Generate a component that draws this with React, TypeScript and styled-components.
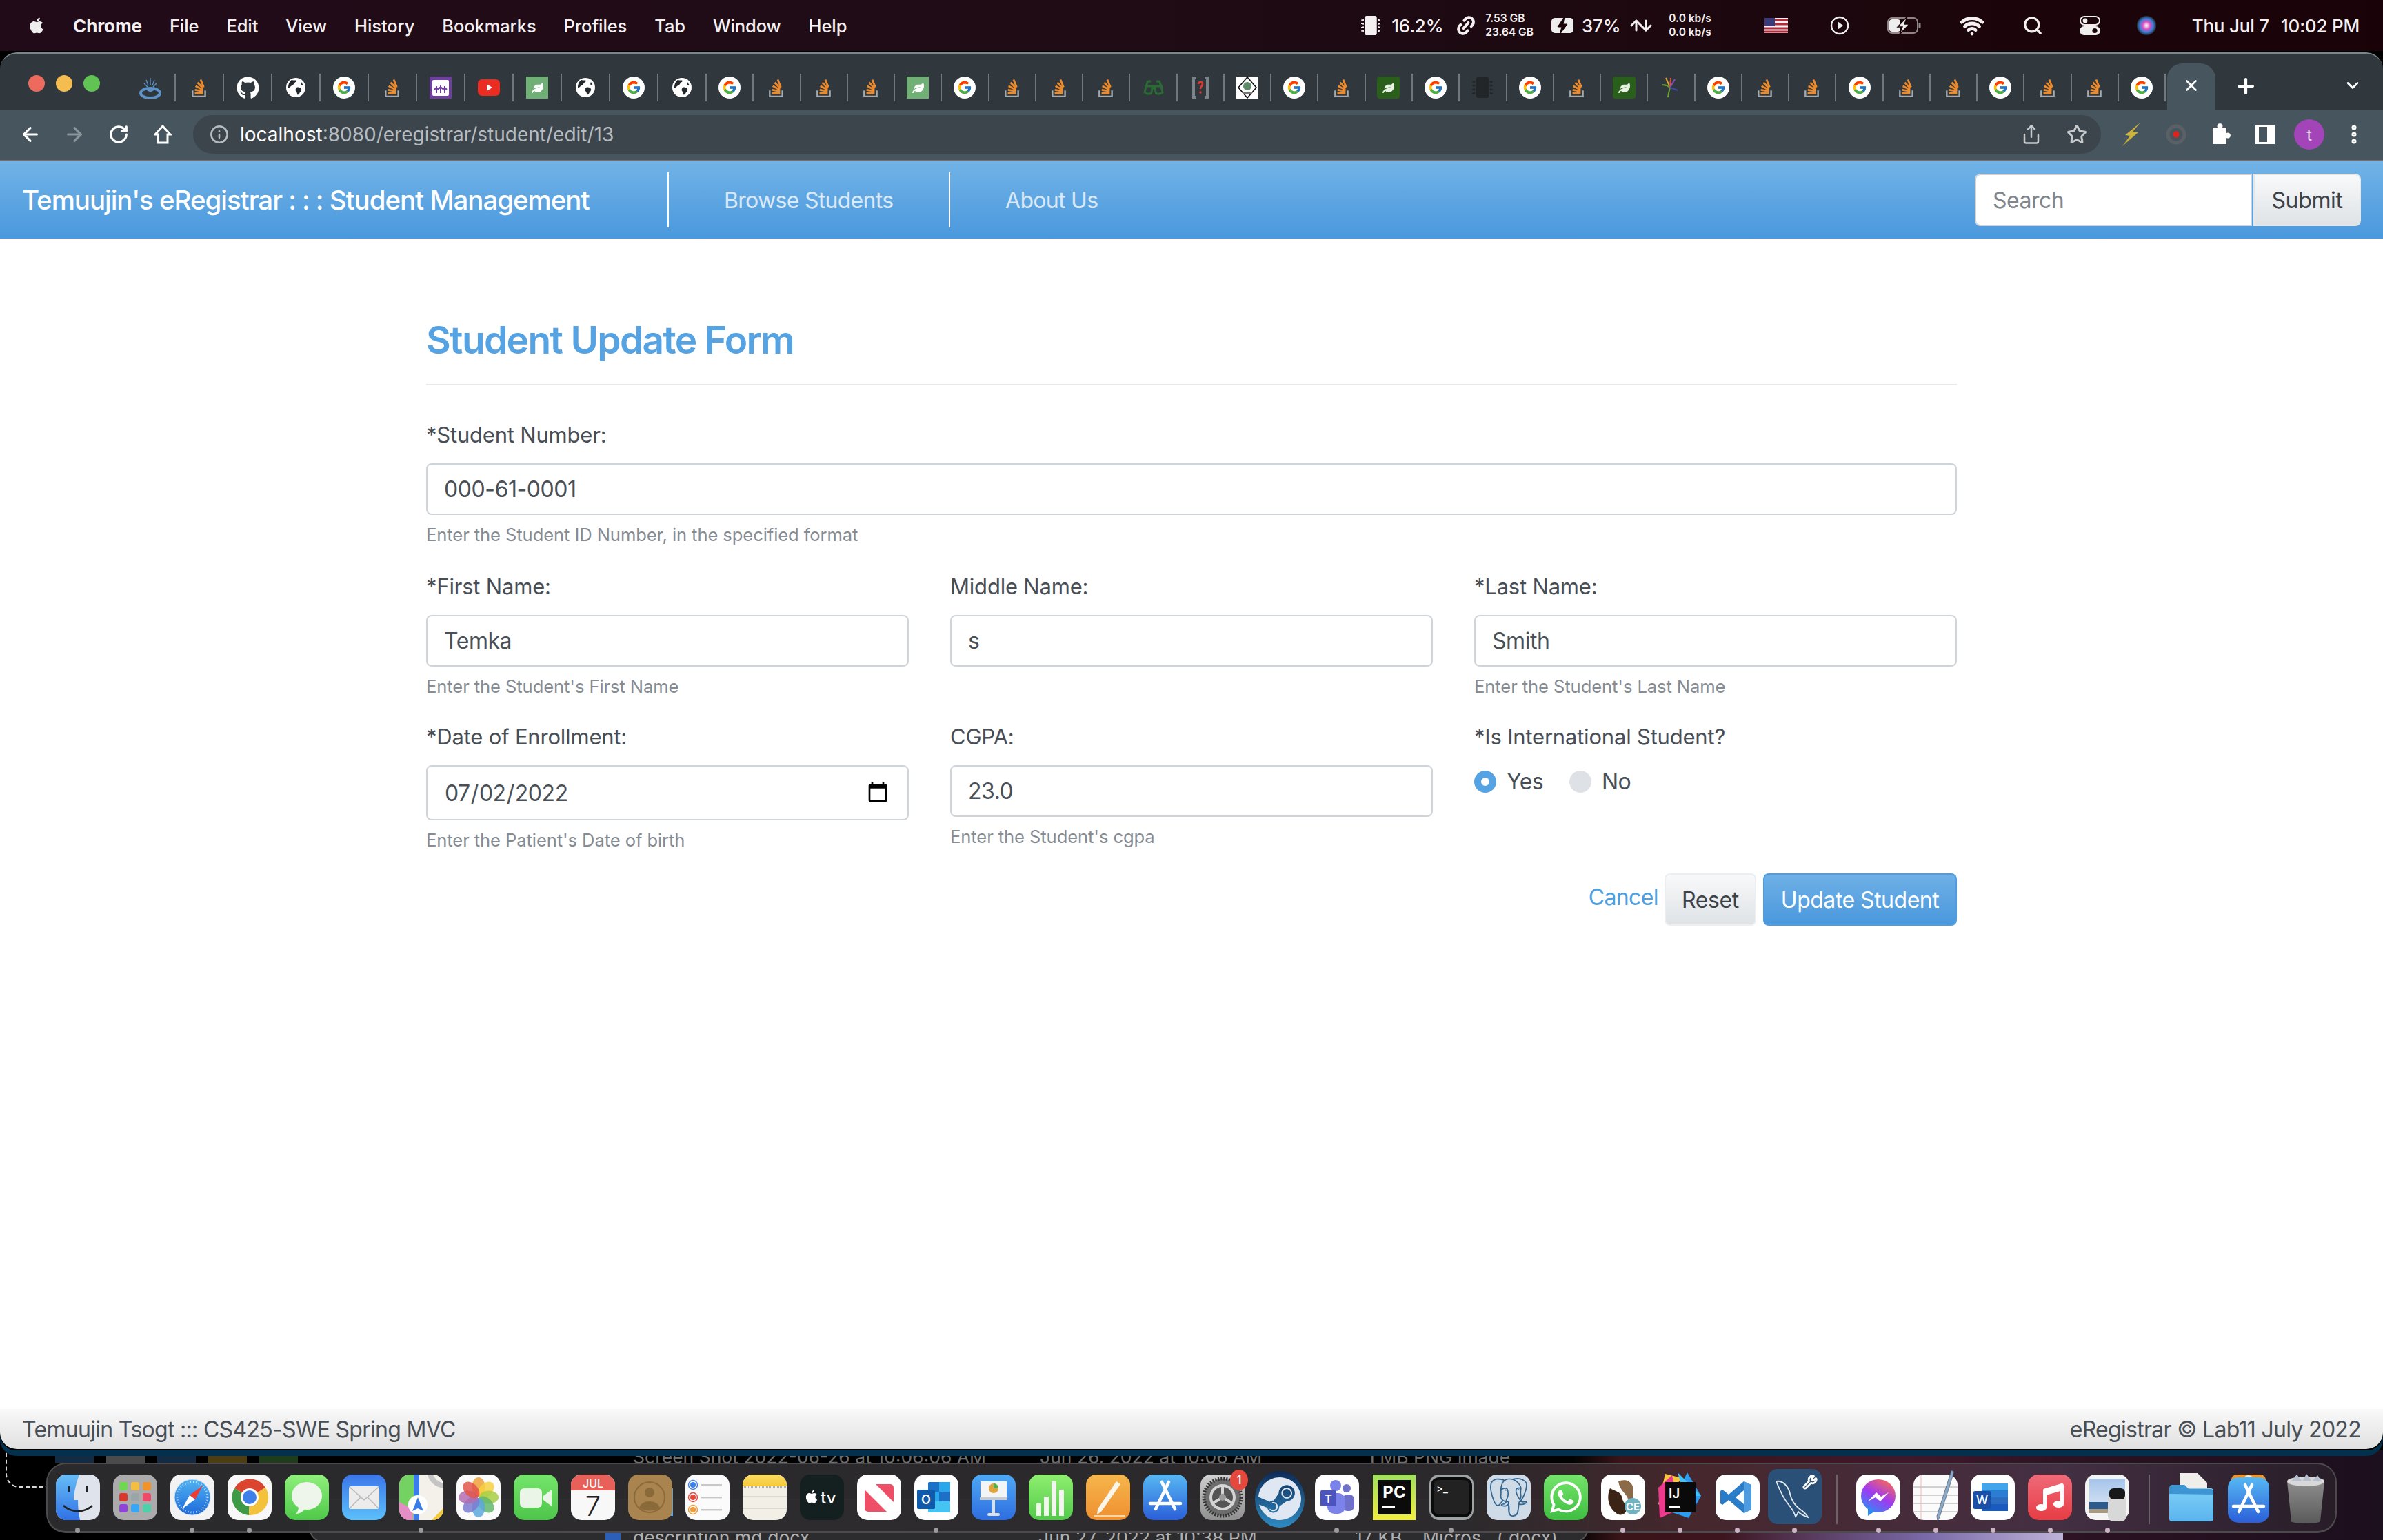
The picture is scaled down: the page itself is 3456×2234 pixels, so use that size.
import React from "react";
import styled, { createGlobalStyle } from "styled-components";
import { FaApple, FaGithub, FaLeaf, FaSteam, FaWhatsapp, FaMusic, FaMicrochip } from "react-icons/fa";
import { FcGoogle } from "react-icons/fc";
import { SiPostgresql } from "react-icons/si";
import { Search, Wifi, Share, Star, Info, EllipsisVertical, ArrowLeft, ArrowRight, RotateCw, X, Plus, ChevronDown, Wrench, Link2, ArrowUp, ArrowDown } from "lucide-react";

const FONT = `Inter, "Liberation Sans", sans-serif`;

const Global = createGlobalStyle`
  html, body { margin: 0; padding: 0; background: #000; }
  body { font-family: ${FONT}; }
  * { box-sizing: border-box; }
`;

const Screen = styled.div`
  width: 3456px; height: 2234px; display: flex; flex-direction: column; overflow: hidden; background: #000;
`;

/* ---------- macOS menu bar ---------- */
const MenuBar = styled.header`
  height: 74px; margin-bottom: 2px; flex: none; display: flex; align-items: center; padding: 0 34px 0 40px;
  background: linear-gradient(90deg, #220b19 0%, #1f0c15 45%, #1a0308 100%);
  color: #f4f0f2; font-size: 26px;
`;
const MenuItems = styled.nav`display: flex; align-items: center; gap: 40px;`;
const MenuItem = styled.span<{ $bold?: boolean }>`
  font-weight: ${p => (p.$bold ? 700 : 500)}; white-space: nowrap; letter-spacing: -0.1px;
  font-size: ${p => (p.$bold ? 26 : 25.5)}px;
`;
const Tray = styled.div`margin-left: auto; display: flex; align-items: center;`;
const TrayItem = styled.div<{ $gap: number }>`
  margin-left: ${p => p.$gap}px; display: flex; align-items: center; justify-content: center; white-space: nowrap;
  font-weight: 500; letter-spacing: -0.2px; font-size: 26px;
`;
const TrayStack = styled(TrayItem)`
  flex-direction: column; font-size: 15.5px; line-height: 20px; align-items: flex-start; letter-spacing: 0; font-weight: 600;
`;
const TrayArrows = styled(TrayItem)`width: 28px;`;

/* ---------- browser window ---------- */
const Window = styled.div`
  height: 2028px; flex: none; display: flex; flex-direction: column; overflow: hidden;
  border-radius: 24px; position: relative; z-index: 2;
  border-bottom: 2px solid #000;
`;
const WindowShadow = styled.div`
  border-radius: 24px; box-shadow: 0 8px 0 #03304c; position: relative; z-index: 2; flex: none;
`;
const TabStrip = styled.div`
  height: 84px; flex: none; display: flex; align-items: flex-start; background: #30383e;
  border-top: 2px solid #7d878b; position: relative; padding-left: 41px; border-radius: 24px 24px 0 0;
`;
const Lights = styled.div`display: flex; gap: 16px; padding-top: 31px; width: 142px; flex: none;`;
const Light = styled.span<{ $c: string }>`
  width: 24px; height: 24px; border-radius: 50%; background: ${p => p.$c};
`;
const Tabs = styled.div`display: flex; height: 100%; align-items: flex-start;`;
const Tab = styled.div<{ $w: number }>`
  width: ${p => p.$w}px; height: 40px; margin-top: 29px; display: flex; align-items: center; justify-content: center;
  border-right: 2px solid #6f787d; flex: none;
`;
const ActiveTab = styled.div`
  width: 70px; height: 68px; margin: 14px 0 0 2px; flex: none; background: #47555e; border-radius: 22px 22px 0 0;
  display: flex; align-items: center; justify-content: center; color: #fff; padding-bottom: 4px;
`;
const NewTab = styled.div`
  width: 36px; margin: 30px 0 0 26px; display: flex; justify-content: center; color: #fff; flex: none;
`;
const TabMenu = styled.div`
  margin: 32px 30px 0 auto; color: #fff; display: flex;
`;
const Toolbar = styled.div`
  height: 74px; flex: none; display: flex; align-items: center; background: #47555e; padding: 0 28px 2px 28px;
  border-bottom: 2px solid #6d7376; color: #fff;
`;
const NavIcon = styled.div<{ $dim?: boolean }>`
  width: 32px; height: 40px; margin-right: 32px; flex: none; display: flex; align-items: center; justify-content: center;
  color: ${p => (p.$dim ? "#89949b" : "#fff")};
`;
const UrlBar = styled.div`
  margin-left: -4px; flex: none; width: 2767px; height: 56px; border-radius: 28px; background: #3d454c; display: flex; align-items: center;
  padding: 0 20px 0 24px; color: #b6bcc0; font-size: 28px; letter-spacing: 0;
`;
const UrlInfo = styled.div`display: flex; margin-right: 16px; color: #b6bcc0;`;
const UrlHost = styled.span`color: #fff;`;
const UrlActions = styled.div`margin-left: auto; display: flex; align-items: center; gap: 36px; color: #c6cacc;`;
const ExtIcons = styled.div`display: flex; align-items: center; margin-left: 12px;`;
const ExtIcon = styled.div`
  width: 64.5px; height: 48px; display: flex; align-items: center; justify-content: center; flex: none;
`;
const Avatar = styled.div`
  width: 44px; height: 44px; border-radius: 50%; background: #a344b8; color: #e9d7ee; font-size: 24px;
  display: flex; align-items: center; justify-content: center;
`;

/* ---------- app navbar ---------- */
const Navbar = styled.nav`
  height: 112px; flex: none; display: flex; align-items: center; padding: 0 32px;
  background: linear-gradient(180deg, #71b3e7 0%, #4a98dd 100%);
`;
const Brand = styled.span`
  font-size: 38.5px; font-weight: 500; color: #fff; width: 936px; flex: none; white-space: nowrap; letter-spacing: -1.05px;
`;
const NavLink = styled.a<{ $w: number }>`
  height: 80px; width: ${p => p.$w}px; flex: none; display: flex; align-items: center; padding-left: 80px;
  border-left: 2px solid #fff; font-size: 32px; color: #d9e9f7; letter-spacing: -0.7px; white-space: nowrap;
`;
const SearchForm = styled.form`margin-left: auto; display: flex;`;
const SearchInput = styled.input`
  width: 402px; height: 76px; border: 2px solid #ced4da; border-radius: 8px 0 0 8px; padding: 0 24px;
  font: 400 32px ${FONT}; letter-spacing: -0.5px; color: #495057; background: #fff; outline: none;
  &::placeholder { color: #7f868d; opacity: 1; }
`;
const SubmitButton = styled.button`
  width: 156px; height: 76px; margin-left: 2px; border: 2px solid #e4e7ea; border-radius: 0 8px 8px 0;
  background: linear-gradient(180deg, #f8f9fa, #dfe3e6); font: 400 32px ${FONT}; letter-spacing: -0.35px; color: #3d4248; padding: 0;
`;

/* ---------- form ---------- */
const Main = styled.main`
  flex: 1; background: #fff; padding: 113px 618px 0; color: #495057; min-height: 0;
`;
const Title = styled.h3`
  margin: 0; font-size: 55px; line-height: 68px; font-weight: 600; color: #56a3e3; letter-spacing: -1.65px;
  padding-bottom: 30px; border-bottom: 2px solid #e6e7e8; margin-bottom: 54px;
`;
const Row = styled.div<{ $cols: number; $mb: number }>`
  display: grid; grid-template-columns: repeat(${p => p.$cols}, 1fr); column-gap: 60px; margin-bottom: ${p => p.$mb}px;
`;
const Field = styled.div`display: flex; flex-direction: column;`;
const Label = styled.label`
  font-size: 31px; line-height: 36px; margin-bottom: 23px; font-weight: 400; letter-spacing: -0.2px; color: #484e55;
`;
const TextInput = styled.input`
  width: 100%; height: 75px; border: 2px solid #ced4da; border-radius: 8px; padding: 0 24px; outline: none;
  font: 400 32px ${FONT}; color: #495057; background: #fff; letter-spacing: -0.45px;
`;
const DateInput = styled(TextInput)`
  height: 80px;
  &::-webkit-calendar-picker-indicator { width: 34px; height: 34px; padding: 0; margin: 0 2px 0 0; opacity: 1; }
`;
const Help = styled.small`
  font-size: 25.6px; line-height: 30px; margin-top: 14px; color: #858c93; letter-spacing: -0.1px;
`;
const Radios = styled.div`display: flex; align-items: center; margin-top: 4px;`;
const RadioLabel = styled.label`
  display: flex; align-items: center; font-size: 32px; line-height: 40px; margin-right: 38px; letter-spacing: -0.6px; color: #484e55;
`;
const Radio = styled.input<{ $on?: boolean }>`
  appearance: none; margin: 0 15px 0 0; width: 32px; height: 32px; border-radius: 50%; flex: none;
  background: ${p => (p.$on ? "#fff" : "#dee2e6")}; border: ${p => (p.$on ? "10px solid #56a3e3" : "none")};
`;
const Actions = styled.div`display: flex; justify-content: flex-end; align-items: center; margin-top: 33px;`;
const CancelLink = styled.a`
  font-size: 32px; color: #4ca0e2; margin-right: 9px; margin-top: -8px; letter-spacing: -0.6px;
`;
const ResetButton = styled.button`
  width: 133px; height: 76px; border: 2px solid #eceef0; border-radius: 8px; margin-right: 10px; padding: 0;
  background: linear-gradient(180deg, #f8f9fa, #dfe3e6); font: 400 32px ${FONT}; color: #3d4248; letter-spacing: -0.4px;
`;
const UpdateButton = styled.button`
  width: 281px; height: 76px; border: 2px solid #4f9de0; border-radius: 8px; padding: 0;
  background: linear-gradient(180deg, #6eb0e6, #4a98dd); font: 400 32px ${FONT}; color: #fff; letter-spacing: -0.5px;
`;

/* ---------- footer ---------- */
const Footer = styled.footer`
  height: 58px; flex: none; display: flex; align-items: center; justify-content: space-between; padding: 0 32px;
  background: linear-gradient(180deg, #f9f9f9, #e0e0e0); font-size: 32px; color: #484e55; letter-spacing: -0.7px;
  border-radius: 0 0 24px 24px;
`;

/* ---------- desktop + dock ---------- */
const Desktop = styled.div`
  flex: 1; position: relative; padding: 18px 0 0 67px;
  background: linear-gradient(90deg, #000 0%, #030303 66%, #3a1418 68%, #40182c 80%, #2a1222 88%, #1c0f1e 100%);
`;
const Behind = styled.span<{ $x: number; $y: number; $c: string }>`
  position: absolute; left: ${p => p.$x}px; top: ${p => p.$y}px; font-size: 26.5px; line-height: 36px; color: ${p => p.$c}; white-space: nowrap;
`;
const BehindOutline = styled.div`
  position: absolute; left: 8px; top: -40px; width: 60px; height: 94px; border: 2px dashed #d8d8d8; border-top: 0; border-right: 0; border-radius: 0 0 0 20px;
`;
const BehindWindow = styled.div`
  position: absolute; left: 448px; top: 70px; width: 1856px; height: 64px; background: #2c2c2e; border: 2px solid #55555a; border-radius: 22px;
`;
const BehindWedge = styled.div`
  position: absolute; left: 2500px; bottom: 0; width: 492px; height: 11px; background: linear-gradient(90deg, rgba(120,100,170,0), #7a6aa8 60%, #bdb2d8);
`;
const BehindThumbs = styled.div`
  position: absolute; left: 80px; top: 8px; display: flex; gap: 18px;
`;
const BehindThumb = styled.span<{ $c: string }>`
  width: 56px; height: 10px; background: ${p => p.$c}; opacity: .35;
`;
const BehindDoc = styled.span`
  position: absolute; left: 878px; top: 119px; width: 22px; height: 12px; background: #2b5fb8;
`;
const Dock = styled.div`
  position: relative; z-index: 1; width: 3322px; height: 102px; display: flex; align-items: flex-start; padding: 15px 0 0 2px;
  border: 2px solid #4c4a4d; border-bottom-width: 3px; border-radius: 28px;
  background: linear-gradient(90deg, rgba(44,43,45,.97), rgba(44,42,44,.97) 62%, rgba(70,40,46,.95) 72%, rgba(70,50,70,.9) 88%, rgba(40,30,40,.93));
`;
const Slot = styled.div`
  width: 83px; height: 66px; flex: none; position: relative; display: flex; justify-content: center;
`;
const Dot = styled.span<{ $pink?: boolean }>`
  position: absolute; left: 38px; top: 77px; width: 7px; height: 8px; border-radius: 50%;
  background: ${p => (p.$pink ? "#c9b3c4" : "#9a9a9a")};
`;
const DockDivider = styled.div`
  width: 2px; height: 72px; margin: 0 18px 0 18.5px; flex: none; background: #6a6268;
`;
const Badge = styled.span`
  position: absolute; right: 4px; top: -7px; width: 26px; height: 30px; border-radius: 50%; background: #e5483d; color: #fff;
  font-size: 17px; display: flex; align-items: center; justify-content: center; font-weight: 500;
`;
const Tile = styled.svg`display: block; flex: none; overflow: visible;`;
const IconText = styled.text`font-family: ${FONT};`;

/* ---------- favicons ---------- */
const Stack = () => (
  <svg width="24" height="28" viewBox="0 0 22 26" style={{ overflow: "visible" }}>
    <path d="M2 17v8h17v-8" fill="none" stroke="#a3abb0" strokeWidth="2.2" />
    <g fill="#ef8a2a">
      <rect x="5" y="19.3" width="11" height="2.6" />
      <rect x="5.4" y="14.8" width="11" height="2.6" transform="rotate(10 5.4 14.8)" />
      <rect x="6.6" y="9.8" width="11" height="2.6" transform="rotate(28 6.6 9.8)" />
      <rect x="9.6" y="5.4" width="11" height="2.6" transform="rotate(46 9.6 5.4)" />
      <rect x="14" y="1.8" width="11" height="2.6" transform="rotate(68 14 1.8)" />
    </g>
  </svg>
);
const Google = () => (
  <svg width="32" height="32" viewBox="0 0 32 32">
    <circle cx="16" cy="16" r="16" fill="#fff" />
    <FcGoogle x="5" y="5" size="22" />
  </svg>
);
const Web = () => (
  <svg width="28" height="28" viewBox="0 0 28 28">
    <circle cx="14" cy="14" r="14" fill="#fff" />
    <path d="M8 3c3 1 5 0 7 1-1 3-3 2-4 5-1 2-4 2-5 4-1 1-2 1-3 1 0-5 2-9 5-11zM15 14c3-1 6 0 7 2 1 3-2 4-3 7-1 1-2 2-3 1 0-3-1-4-2-5-1-2 0-4 1-5zM22 6l3 5-3 0c-1-2-1-3 0-5z" fill="#23282c" />
  </svg>
);
const Gh = () => <FaGithub size={33} color="#fff" />;
const Purple = () => (
  <svg width="32" height="32" viewBox="0 0 32 32">
    <rect width="32" height="32" fill="#6f3f9f" />
    <rect x="4" y="5" width="24" height="23" rx="2" fill="#fff" />
    <path d="M10 14v10M16 12v12M22 14v10M7 19l3-3 3 3M13 18l3-3 3 3M19 19l3-3 3 3" stroke="#6f3f9f" strokeWidth="2" fill="none" />
  </svg>
);
const Yt = () => (
  <svg width="32" height="24" viewBox="0 0 32 24">
    <rect width="32" height="24" rx="6" fill="#ea2c22" />
    <path d="M13 7l8 5-8 5z" fill="#fff" />
  </svg>
);
const LeafBox = styled.div<{ $c: string; $r: number; $w: number }>`
  width: ${p => p.$w}px; height: 32px; background: ${p => p.$c}; border-radius: ${p => p.$r}px; display: flex; align-items: center; justify-content: center;
`;
const Leaf = () => <LeafBox $c="#70af76" $r={0} $w={32}><FaLeaf size={17} color="#fff" /></LeafBox>;
const DarkLeaf = () => <LeafBox $c="#2a5e1b" $r={4} $w={33}><FaLeaf size={17} color="#e8f0e4" /></LeafBox>;
const Glasses = () => (
  <svg width="30" height="26" viewBox="0 0 30 26" fill="none" stroke="#2a6b34" strokeWidth="3">
    <path d="M2 11h26M4 11l-2 9c3 3 9 3 10 0l1-6h4l1 6c1 3 7 3 10 0l-2-9M7 3l-3 8M23 3l3 8M11 4h-4M23 4h-4" />
  </svg>
);
const Bracket = () => (
  <svg width="28" height="32" viewBox="0 0 28 32" fill="none">
    <path d="M8 2H4v28h4M20 2h4v28h-4" stroke="#7a848a" strokeWidth="4" />
    <path d="M11 11c0-4 6-4 6 0 0 3-3 3-3 7" stroke="#e03a30" strokeWidth="2.6" />
    <circle cx="14" cy="23" r="1.8" fill="#e03a30" />
  </svg>
);
const Diamond = () => (
  <svg width="32" height="32" viewBox="0 0 32 32">
    <rect width="32" height="32" fill="#fff" />
    <path d="M16 1l13 15-13 15L3 16z" fill="none" stroke="#111" strokeWidth="1.6" />
    <circle cx="16" cy="14" r="6" fill="#5d8b68" />
    <path d="M9 24h14" stroke="#777" strokeWidth="3" />
  </svg>
);
const Chip = () => <FaMicrochip size={30} color="#222629" />;
const Flower = () => (
  <svg width="32" height="32" viewBox="0 0 32 32" fill="none" strokeWidth="2">
    <path d="M12 30c1-7 2-10 3-14" stroke="#67a42f" />
    <path d="M15 16L8 12" stroke="#67a42f" />
    <path d="M15 16L9 2" stroke="#e0a42a" />
    <path d="M15 16l1-14" stroke="#d84a3a" />
    <path d="M15 16L22 4" stroke="#8750b0" />
    <path d="M15 16l11 4" stroke="#3d4aa8" />
    <path d="M4 12l6 1" stroke="#5ea12e" />
  </svg>
);

const F: Record<string, React.FC> = { s: Stack, g: Google, w: Web, h: Gh, p: Purple, y: Yt, l: Leaf, d: DarkLeaf, e: Glasses, b: Bracket, i: Diamond, c: Chip, f: Flower };
const tabs1 = "shwgspylwgw".split("");
const tabs2 = "gssslgsssebigsdgcgsdfgssgssgssg".split("");
const Java = () => (
  <svg width="32" height="32" viewBox="0 0 32 32" fill="none">
    <path d="M16 2v10M10 5l3 8M22 5l-3 8M7 10l5 5M25 10l-5 5" stroke="#5d93c9" strokeWidth="1.4" />
    <ellipse cx="16" cy="24" rx="14" ry="7" stroke="#5d93c9" strokeWidth="4" />
    <ellipse cx="16" cy="19" rx="5" ry="3" fill="#5d93c9" />
  </svg>
);

/* ---------- dock icons ---------- */
const gid = (n: string) => `url(#${n})`;
const Grad = ({ id, a, b }: { id: string; a: string; b: string }) => (
  <defs><linearGradient id={id} x1="0" y1="0" x2="0" y2="1"><stop offset="0" stopColor={a} /><stop offset="1" stopColor={b} /></linearGradient></defs>
);
const Svg = ({ children, w = 66, h = 66 }: { children: React.ReactNode; w?: number; h?: number }) => (
  <Tile width={w} height={h} viewBox={`0 0 ${w} ${h}`}>{children}</Tile>
);
const R = ({ fill }: { fill: string }) => <rect x="1" y="0" width="64" height="66" rx="15" fill={fill} />;

const Finder = () => (
  <Svg><Grad id="fnd" a="#67bdf6" b="#2f72e6" /><R fill="#dfe4ec" />
    <path d="M16 0h19c-5 14-8 27-8 37h6c0 10 1 20 3 29H16C8 66 1 59 1 51V15C1 7 8 0 16 0z" fill={gid("fnd")} />
    <path d="M20 17v8M46 17v8" stroke="#222" strokeWidth="3" /><path d="M12 45c12 11 30 11 42 0" stroke="#222" strokeWidth="2.5" fill="none" />
  </Svg>
);
const Launchpad = () => (
  <Svg><R fill="#ababab" />
    {["#6fd84e","#f5bd42","#f0932b","#d8382e","#9aa5a8","#ef4a6a","#8f43d8","#36a6f5","#4ed1a9"].map((c, i) => (
      <rect key={i} x={10 + (i % 3) * 17} y={11 + Math.floor(i / 3) * 16} width="12" height="12" rx="3" fill={c} />
    ))}
  </Svg>
);
const Safari = () => (
  <Svg><Grad id="sf" a="#50b3f3" b="#1d69d8" /><R fill="#f2f2f2" /><circle cx="33" cy="33" r="26" fill={gid("sf")} stroke="#cfe3f5" strokeWidth="1" />
    <circle cx="33" cy="33" r="22" fill="none" stroke="#fff" strokeWidth="3" strokeDasharray="1 3" opacity=".7" />
    <path d="M48 16L29 30l8 6z" fill="#ee3a32" /><path d="M18 50l11-20 8 6z" fill="#fff" />
  </Svg>
);
const Chrome = () => (
  <Svg><R fill="#f8f8f8" />
    <path d="M33 33L11 20a26 26 0 0 1 45-1z" fill="#d9452f" />
    <path d="M33 33L11 20a26 26 0 0 0 21 39z" fill="#3f9a48" />
    <path d="M33 33L56 19a26 26 0 0 1-24 40z" fill="#f4c13b" />
    <circle cx="33" cy="33" r="13" fill="#fff" /><circle cx="33" cy="33" r="10" fill="#3f7fe8" />
  </Svg>
);
const Messages = () => (
  <Svg><Grad id="msg" a="#8ff07c" b="#4fc94a" /><R fill={gid("msg")} />
    <ellipse cx="33" cy="31" rx="22" ry="20" fill="#eef6ec" /><path d="M21 46c0 5-1 8-4 11 5 0 10-3 13-6z" fill="#eef6ec" />
  </Svg>
);
const Mail = () => (
  <Svg><Grad id="ml" a="#3b76ea" b="#5cc0fb" /><R fill={gid("ml")} />
    <rect x="11" y="17" width="44" height="33" rx="3" fill="#ececec" /><path d="M12 18l21 19 21-19M12 49l16-16M54 49L38 33" stroke="#b9b9b9" strokeWidth="1.5" fill="none" />
  </Svg>
);
const Maps = () => (
  <Svg><R fill="#f3f1ea" />
    <path d="M1 15C1 7 8 0 16 0h6v66H16C8 66 1 59 1 51z" fill="#74d263" />
    <path d="M1 40l20 10v16H14C8 66 1 59 1 51z" fill="#e58ec6" />
    <path d="M22 0h8v66h-8z" fill="#3a7cea" /><path d="M42 0c3 12 12 18 23 20v-7c-6-2-12-6-15-13z" fill="#c4c4c4" />
    <path d="M48 66l17-17v2c0 8-7 15-15 15z" fill="#f5c83c" />
    <circle cx="28" cy="44" r="14" fill="#fff" /><path d="M28 33l8 20-8-4-8 4z" fill="#3a7cea" />
  </Svg>
);
const Photos = () => (
  <Svg><R fill="#fbfbfb" />
    {["#f0a03a","#f6d13f","#a7cf45","#63b76b","#5ca7dc","#7b7bd0","#b36cb0","#e2554a"].map((c, i) => (
      <ellipse key={i} cx="33" cy="18" rx="9.5" ry="14" fill={c} opacity=".85" transform={`rotate(${i * 45} 33 33)`} />
    ))}
  </Svg>
);
const FaceTime = () => (
  <Svg><Grad id="ft" a="#74e56a" b="#4dc44a" /><R fill={gid("ft")} />
    <rect x="10" y="20" width="32" height="28" rx="6" fill="#eaf5e8" /><path d="M44 31l12-9v24l-12-9z" fill="#eaf5e8" />
  </Svg>
);
const Calendar = () => (
  <Svg><R fill="#f8f8f8" /><path d="M1 23V15C1 7 8 0 16 0h34c8 0 15 7 15 15v8z" fill="#e8605a" />
    <IconText x="33" y="19" textAnchor="middle" fontSize="16" fontWeight="500" fill="#fff">JUL</IconText>
    <IconText x="33" y="60" textAnchor="middle" fontSize="40" fontWeight="300" fill="#222">7</IconText>
  </Svg>
);
const Contacts = () => (
  <Svg><rect x="56" y="20" width="10" height="40" fill="#5aa5e0" /><R fill="#a9844e" />
    <circle cx="32" cy="33" r="22" fill="none" stroke="#8b6a3a" strokeWidth="2" /><circle cx="32" cy="26" r="7" fill="#8b6a3a" /><path d="M17 48c4-12 26-12 30 0-8 6-22 6-30 0z" fill="#8b6a3a" />
  </Svg>
);
const Reminders = () => (
  <Svg><R fill="#fbfbfb" />
    {[["#3b82f0",15],["#e8483c",33],["#ef9a32",51]].map(([c, y], i) => (
      <g key={i}><circle cx="12" cy={y as number} r="4" fill={c as string} /><circle cx="12" cy={y as number} r="6.5" fill="none" stroke={c as string} strokeWidth="1.4" /><rect x="24" y={(y as number) - 1} width="30" height="2.4" fill="#c8c8c8" /></g>
    ))}
  </Svg>
);
const Notes = () => (
  <Svg><Grad id="nt" a="#fbdc62" b="#f6c93b" /><R fill="#f1efe6" /><path d="M1 17v-2C1 7 8 0 16 0h34c8 0 15 7 15 15v2z" fill={gid("nt")} />
    <path d="M1 18h64" stroke="#999" strokeWidth="1.5" strokeDasharray="1 1" /><path d="M1 32h64M1 49h64" stroke="#d5d3ca" strokeWidth="1.5" />
  </Svg>
);
const TV = () => (
  <Svg><R fill="#14201f" />
    <FaApple x="7" y="21" size="22" color="#fff" />
    <IconText x="31" y="42" fontSize="24" fontWeight="500" fill="#fff">tv</IconText>
  </Svg>
);
const News = () => (
  <Svg><R fill="#fff" /><rect x="12" y="14" width="42" height="40" rx="5" fill="#ef4f66" /><path d="M18 14h10l26 26v14H44L12 22V14z" fill="#fff" /></Svg>
);
const Outlook = () => (
  <Svg><R fill="#fff" />
    <rect x="21" y="11" width="32" height="44" rx="2" fill="#1d70c8" /><rect x="37" y="11" width="16" height="14" fill="#28a8ea" /><rect x="21" y="25" width="16" height="14" fill="#28a8ea" /><rect x="21" y="39" width="32" height="16" fill="#50d9ff" opacity=".8" /><rect x="5" y="22" width="26" height="28" rx="2" fill="#0f5aaa" />
    <IconText x="18" y="43" textAnchor="middle" fontSize="18" fontWeight="600" fill="#fff">O</IconText>
  </Svg>
);
const Keynote = () => (
  <Svg><Grad id="kn" a="#4ea9f5" b="#2e6de0" /><R fill={gid("kn")} />
    <rect x="14" y="10" width="38" height="26" fill="#f2f4f6" /><rect x="13" y="33" width="40" height="4" fill="#c6cbd1" /><circle cx="33" cy="20" r="7" fill="#e3a33a" /><path d="M33 13a7 7 0 0 1 7 7h-7z" fill="#4caf50" />
    <rect x="31" y="37" width="4" height="21" fill="#dcdfe3" /><rect x="24" y="56" width="18" height="4" rx="2" fill="#dcdfe3" />
  </Svg>
);
const Numbers = () => (
  <Svg><Grad id="nm" a="#8fef6f" b="#52c94a" /><R fill={gid("nm")} />
    <rect x="12" y="42" width="7" height="18" fill="#f2f7ee" /><rect x="23" y="32" width="7" height="28" fill="#f2f7ee" /><rect x="34" y="10" width="7" height="50" fill="#f2f7ee" /><rect x="45" y="22" width="7" height="38" fill="#f2f7ee" />
  </Svg>
);
const Pages = () => (
  <Svg><Grad id="pg" a="#f6b64b" b="#ef8f30" /><R fill={gid("pg")} />
    <path d="M45 10l6 4-28 40-6 4 1-8z" fill="#fbf6ec" /><rect x="12" y="59" width="46" height="2" fill="#f9d8a8" />
  </Svg>
);
const AppGlyph = () => (
  <path d="M28 11l19 39M38 11L19 50M11 42h44" stroke="#fff" strokeWidth="4.6" strokeLinecap="round" fill="none" />
);
const Appstore = () => (
  <Svg><Grad id="as" a="#56b8f3" b="#2b5fd9" /><R fill={gid("as")} /><AppGlyph /></Svg>
);
const Prefs = () => (
  <Svg><Grad id="pf" a="#d0d0d0" b="#8f8f8f" /><R fill={gid("pf")} />
    <circle cx="33" cy="33" r="27" fill="#6d6d6d" /><circle cx="33" cy="33" r="27" fill="none" stroke="#333" strokeWidth="5" strokeDasharray="2 2" />
    <circle cx="33" cy="33" r="19" fill="#d4d4d4" /><circle cx="33" cy="33" r="15" fill="#555" />
    <path d="M33 33V18M33 33L20 41M33 33l13 8" stroke="#d4d4d4" strokeWidth="4" /><circle cx="33" cy="33" r="5" fill="#999" />
  </Svg>
);
const Steam = () => (
  <Svg w={74} h={72}><Grad id="st" a="#0e2a56" b="#2f8bc2" /><g transform="translate(0,-5)">
    <ellipse cx="37" cy="41" rx="36" ry="41" fill={gid("st")} /><FaSteam x="5" y="8" size="64" color="#dfe8f2" /></g>
  </Svg>
);
const Teams = () => (
  <Svg><R fill="#fff" />
    <circle cx="47" cy="20" r="6" fill="#6f70c9" /><rect x="41" y="29" width="17" height="24" rx="7" fill="#6f70c9" /><circle cx="31" cy="16" r="8" fill="#7b83eb" /><rect x="19" y="27" width="26" height="30" rx="10" fill="#7b83eb" /><rect x="9" y="23" width="23" height="23" rx="2" fill="#4b53bc" />
    <IconText x="20.5" y="41" textAnchor="middle" fontSize="16" fontWeight="600" fill="#fff">T</IconText>
  </Svg>
);
const PyCharm = () => (
  <Svg><Grad id="pc" a="#9fe05c" b="#f2ee3f" /><rect x="2" y="0" width="62" height="66" fill={gid("pc")} /><rect x="9" y="8" width="48" height="50" fill="#0b0b0b" />
    <IconText x="33" y="34" textAnchor="middle" fontSize="24" fontWeight="700" fill="#fff">PC</IconText><rect x="15" y="45" width="19" height="4" fill="#fff" />
  </Svg>
);
const Terminal = () => (
  <Svg><rect x="1" y="0" width="64" height="66" rx="14" fill="#9ea3a5" /><rect x="3" y="4" width="60" height="58" rx="12" fill="#0b0b0b" /><rect x="7" y="8" width="52" height="50" rx="8" fill="#222" />
    <IconText x="11" y="26" fontSize="15" fontFamily="Liberation Mono" fill="#fff">&gt;_</IconText>
  </Svg>
);
const Postgres = () => (
  <Svg><R fill="#cfdbe6" /><SiPostgresql x="5" y="5" size="56" color="#336791" /></Svg>
);
const Whatsapp = () => (
  <Svg><Grad id="wa" a="#74e56a" b="#3fbe42" /><R fill={gid("wa")} /><FaWhatsapp x="7" y="7" size="52" color="#fff" /></Svg>
);
const Beaver = () => (
  <Svg><R fill="#fff" />
    <path d="M14 20c-6 14-2 30 12 38 7 2 12-3 12-8 0-6-6-10-7-18-1-6-9-8-17-12z" fill="#3b2416" /><path d="M26 10c6-3 16-3 20 5 3 6 0 14 2 20 1 3-6 4-8 0-3-8-12-12-14-25z" fill="#8b6a4a" />
    <circle cx="47" cy="46" r="12" fill="#6fb3c2" /><IconText x="47" y="52" textAnchor="middle" fontSize="15" fontWeight="600" fill="#fff">CE</IconText>
  </Svg>
);
const Intellij = () => (
  <Svg w={76} h={72}><g transform="translate(4,-3)">
    <path d="M12 2l24 6-30 40-4-2z" fill="#f9c440" /><path d="M2 22L22 4l10 50-28 12z" fill="#ee3a8c" /><path d="M44 0l20 34-18 32-30-10z" fill="#2b9cf0" /><path d="M30 0l34 34-24 0z" fill="#40c4f5" /><rect x="12" y="14" width="44" height="44" fill="#0a0a0a" />
    <IconText x="17" y="37" fontSize="19" fontWeight="600" fontFamily="Liberation Mono" fill="#fff">IJ</IconText><rect x="17" y="48" width="17" height="3" fill="#fff" /></g>
  </Svg>
);
const VSCode = () => (
  <Svg><R fill="#fff" /><path d="M42 10l11 5v36l-11 5-22-19-9 7-3-2V24l3-2 9 7zM42 23L30 33l12 10z" fill="#2a7bc8" /><path d="M42 10l11 5v36l-11 5z" fill="#4e9be0" /></Svg>
);
const Workbench = () => (
  <Svg w={78} h={80}><g transform="translate(0,-8)"><rect x="0" y="0" width="78" height="80" rx="14" fill="#2a5077" />
    <path d="M12 18c10-2 18 8 20 18 2 9 6 16 14 22 5 4 9 6 12 12-6-2-10-4-14-8-1 3-2 5-4 7-2-6-4-10-9-16-7-8-13-20-19-35z" fill="none" stroke="#dfe9f0" strokeWidth="1.8" />
    <Wrench x="50" y="8" size="22" color="#fff" strokeWidth={3} /></g></Svg>
);
const Messenger = () => (
  <Svg><defs><linearGradient id="ms" x1="0.2" y1="1" x2="0.8" y2="0"><stop offset="0" stopColor="#2f8cf5" /><stop offset=".5" stopColor="#a03af0" /><stop offset="1" stopColor="#fb6a55" /></linearGradient></defs><R fill="#fff" />
    <ellipse cx="33" cy="31" rx="25" ry="24" fill={gid("ms")} /><path d="M18 46v14l9-6z" fill="#2f8cf5" /><path d="M18 39l12-13 7 6 11-6-12 13-7-6z" fill="#fff" />
  </Svg>
);
const TextEdit = () => (
  <Svg w={66} h={70}><g transform="translate(0,-4)"><rect x="1" y="4" width="64" height="66" rx="15" fill="#fbfbfb" /><path d="M1 22h64M1 34h64M1 46h64M1 58h64" stroke="#c4c4c4" strokeWidth="1.5" /><path d="M12 4v66" stroke="#f2b9b9" strokeWidth="1" />
    <path d="M56 -2l4 2-21 66-3 6-1-8z" fill="#89a9c8" stroke="#445" strokeWidth=".6" /></g>
  </Svg>
);
const Word = () => (
  <Svg><R fill="#fff" /><rect x="17" y="13" width="38" height="40" rx="2" fill="#2b7cd3" /><rect x="17" y="13" width="38" height="10" fill="#41a5ee" /><rect x="17" y="33" width="38" height="10" fill="#2b6cc0" /><rect x="17" y="43" width="38" height="10" fill="#185abd" /><rect x="5" y="24" width="25" height="26" rx="2" fill="#1a4fa8" />
    <IconText x="17.5" y="43" textAnchor="middle" fontSize="17" fontWeight="500" fill="#fff">W</IconText>
  </Svg>
);
const Music = () => (
  <Svg><Grad id="mu" a="#ef6a78" b="#e73c44" /><R fill={gid("mu")} /><FaMusic x="13" y="13" size="40" color="#fff" /></Svg>
);
const Preview = () => (
  <Svg w={66} h={70}><Grad id="pv" a="#a5c4ea" b="#dfe9f5" /><g transform="translate(0,-2)"><rect x="1" y="2" width="64" height="66" rx="15" fill="#f4f4f4" /><rect x="7" y="8" width="52" height="50" fill={gid("pv")} /><path d="M7 42h52v16H7z" fill="#2d5c8c" /><path d="M7 52h30v6H7z" fill="#a89a80" /><rect x="34" y="30" width="27" height="40" rx="8" fill="#d8d8d8" /><rect x="36" y="22" width="23" height="16" rx="6" fill="#181818" /></g></Svg>
);
const Folder = () => (
  <Svg w={68} h={70}><Grad id="fo" a="#7ccff7" b="#5bb4ee" /><g transform="translate(0,-2)"><path d="M17 0h26l14 14v24H17z" fill="#f0eeea" /><path d="M2 22h60a4 4 0 0 1 4 4v40a4 4 0 0 1-4 4H6a4 4 0 0 1-4-4z" fill={gid("fo")} /><path d="M2 30V22c0-3 2-5 5-5h16c4 0 5 6 8 6h31c2 0 4 2 4 4v4z" fill="#3e95d4" /></g></Svg>
);
const Apps2 = () => (
  <Svg w={62} h={70}><Grad id="as2" a="#56b8f3" b="#2b5fd9" /><g transform="translate(0,-2)"><rect x="6" y="2" width="50" height="30" rx="8" fill="#f0932b" /><circle cx="31" cy="12" r="9" fill="#e5edf5" /><g transform="translate(-2,6)"><rect x="3" y="0" width="60" height="66" rx="15" fill={gid("as2")} /><AppGlyph /></g></g></Svg>
);
const Trash = () => (
  <Svg w={58} h={74}><Grad id="tr" a="#8d8d8d" b="#5a5a5a" /><g transform="translate(0,-4)"><path d="M2 14h54l-6 58c-1 4-41 4-42 0z" fill={gid("tr")} /><ellipse cx="29" cy="14" rx="27" ry="7" fill="#d8d8d8" /><path d="M8 14l8-10 8 10 6-11 8 11 8-9 6 9z" fill="#b8c0d0" /></g></Svg>
);

type D = [React.FC<any>, 0 | 1 | 2];
const dockA: D[] = [[Finder,1],[Launchpad,0],[Safari,1],[Chrome,1],[Messages,0],[Mail,0],[Maps,1],[Photos,0],[FaceTime,0],[Calendar,0],[Contacts,0],[Reminders,0],[Notes,0],[TV,0],[News,0],[Outlook,1],[Keynote,0],[Numbers,0],[Pages,0],[Appstore,0],[Prefs,0],[Steam,0],[Teams,1],[PyCharm,0],[Terminal,1],[Postgres,0],[Whatsapp,0],[Beaver,2],[Intellij,2],[VSCode,2],[Workbench,2]];
const dockB: D[] = [[Messenger,2],[TextEdit,2],[Word,2],[Music,2],[Preview,2]];
const dockC: D[] = [[Folder,0],[Apps2,0],[Trash,0]];

const DockRun = ({ items }: { items: D[] }) => (
  <>
    {items.map(([Icon, dot], i) => (
      <Slot key={i}>
        <Icon />
        {Icon === Prefs && <Badge>1</Badge>}
        {dot > 0 && <Dot $pink={dot === 2} />}
      </Slot>
    ))}
  </>
);

export default function App() {
  return (
    <Screen>
      <Global />
      <MenuBar>
        <MenuItems>
          <FaApple size={26} color="#eee" />
          <MenuItem $bold>Chrome</MenuItem>
          {["File", "Edit", "View", "History", "Bookmarks", "Profiles", "Tab", "Window", "Help"].map(m => <MenuItem key={m}>{m}</MenuItem>)}
        </MenuItems>
        <Tray>
          <TrayItem $gap={0}><FaMicrochip size={28} /></TrayItem>
          <TrayItem $gap={16}>16.2%</TrayItem>
          <TrayItem $gap={17}><Link2 size={32} strokeWidth={3} transform="rotate(-50)" /></TrayItem>
          <TrayStack $gap={12}><span>7.53 GB</span><span>23.64 GB</span></TrayStack>
          <TrayItem $gap={26}>
            <svg width="32" height="26" viewBox="0 0 32 26"><rect x="0" y="2" width="32" height="22" rx="5" fill="#eee" /><path d="M19 0L9 15h6l-3 11 11-15h-6z" fill="#1a0308" stroke="#1a0308" /></svg>
          </TrayItem>
          <TrayItem $gap={12}>37%</TrayItem>
          <TrayArrows $gap={16}><ArrowUp size={24} strokeWidth={3} style={{ marginRight: -10, flex: "none" }} /><ArrowDown size={24} strokeWidth={3} style={{ flex: "none" }} /></TrayArrows>
          <TrayStack $gap={26}><span>0.0 kb/s</span><span>0.0 kb/s</span></TrayStack>
          <TrayItem $gap={77}>
            <svg width="34" height="22" viewBox="0 0 34 22"><rect width="34" height="22" fill="#f4f4f4" /><path d="M0 3h34M0 9h34M0 15h34M0 20h34" stroke="#b5283a" strokeWidth="3" /><rect width="15" height="12" fill="#3a3a78" /></svg>
          </TrayItem>
          <TrayItem $gap={61}>
            <svg width="28" height="28" viewBox="0 0 28 28" fill="none"><circle cx="14" cy="14" r="12" stroke="#eee" strokeWidth="2.4" /><path d="M11 8l8 6-8 6z" fill="#eee" /></svg>
          </TrayItem>
          <TrayItem $gap={55}>
            <svg width="50" height="26" viewBox="0 0 50 26" fill="none"><rect x="1" y="2" width="43" height="22" rx="6" stroke="#8e8688" strokeWidth="2" /><rect x="3" y="4" width="16" height="18" rx="4" fill="#eee" /><path d="M47 9v8" stroke="#8e8688" strokeWidth="3" /><path d="M29 0L15 15h7l-4 11 14-15h-7z" fill="#eee" stroke="#1a0308" strokeWidth="1.4" /></svg>
          </TrayItem>
          <TrayItem $gap={55}><Wifi size={36} strokeWidth={3.2} /></TrayItem>
          <TrayItem $gap={55}><Search size={30} strokeWidth={2.6} /></TrayItem>
          <TrayItem $gap={53}>
            <svg width="30" height="28" viewBox="0 0 30 28" fill="none"><rect x="1" y="1" width="28" height="12" rx="6" stroke="#eee" strokeWidth="2" /><circle cx="8" cy="7" r="3.4" fill="#eee" /><rect y="15" width="30" height="13" rx="6.5" fill="#eee" /><circle cx="22" cy="21.5" r="3.6" fill="#1a0308" /></svg>
          </TrayItem>
          <TrayItem $gap={53}>
            <svg width="28" height="28" viewBox="0 0 28 28"><defs><radialGradient id="siri"><stop offset="0" stopColor="#fff" /><stop offset=".4" stopColor="#d94fc0" /><stop offset=".7" stopColor="#3a7fd9" /><stop offset="1" stopColor="#25303a" /></radialGradient></defs><circle cx="14" cy="14" r="14" fill="url(#siri)" /></svg>
          </TrayItem>
          <TrayItem $gap={52}>Thu Jul 7</TrayItem>
          <TrayItem $gap={17}>10:02 PM</TrayItem>
        </Tray>
      </MenuBar>

      <WindowShadow>
        <Window>
          <TabStrip>
            <Lights>
              <Light $c="#ee6a5f" /><Light $c="#f5bd4f" /><Light $c="#61c354" />
            </Lights>
            <Tabs>
              <Tab $w={72}><Java /></Tab>
              {tabs1.map((k, i) => { const I = F[k]; return <Tab key={i} $w={70}><I /></Tab>; })}
              {tabs2.map((k, i) => { const I = F[k]; return <Tab key={i} $w={68.27}><I /></Tab>; })}
              <ActiveTab><X size={26} strokeWidth={2.4} /></ActiveTab>
              <NewTab><Plus size={34} strokeWidth={3} /></NewTab>
            </Tabs>
            <TabMenu><ChevronDown size={28} strokeWidth={2.4} /></TabMenu>
          </TabStrip>
          <Toolbar>
            <NavIcon><ArrowLeft size={34} strokeWidth={2.4} /></NavIcon>
            <NavIcon $dim><ArrowRight size={34} strokeWidth={2.4} /></NavIcon>
            <NavIcon><RotateCw size={30} strokeWidth={2.6} /></NavIcon>
            <NavIcon>
              <svg width="26" height="28" viewBox="0 0 26 28" fill="none" stroke="#fff" strokeWidth="3"><path d="M13 2L2 14h4v12h14V14h4z" /></svg>
            </NavIcon>
            <UrlBar>
              <UrlInfo><Info size={28} strokeWidth={2.2} /></UrlInfo>
              <UrlHost>localhost</UrlHost>:8080/eregistrar/student/edit/13
              <UrlActions>
                <Share size={30} strokeWidth={2} />
                <Star size={30} strokeWidth={2.4} />
              </UrlActions>
            </UrlBar>
            <ExtIcons>
              <ExtIcon>
                <svg width="28" height="34" viewBox="0 0 28 34"><path d="M27 0L5 18l7 1L1 34l23-20-8-1z" fill="#c9b13c" /></svg>
              </ExtIcon>
              <ExtIcon>
                <svg width="30" height="32" viewBox="0 0 30 32" fill="none"><circle cx="15" cy="16" r="12" stroke="#5a6064" strokeWidth="5" /><circle cx="15" cy="16" r="4.5" fill="#e0241b" /></svg>
              </ExtIcon>
              <ExtIcon>
                <svg width="30" height="32" viewBox="0 0 30 32"><path d="M4 6h7a4 4 0 1 1 7 0h6v8a4 4 0 1 1 0 7v9H4z" fill="#fff" /></svg>
              </ExtIcon>
              <ExtIcon>
                <svg width="28" height="28" viewBox="0 0 28 28" fill="none"><rect x="1.5" y="1.5" width="25" height="25" stroke="#fff" strokeWidth="3" /><rect x="17" y="2" width="10" height="24" fill="#fff" /><rect x="3" y="3" width="2" height="22" fill="#fff" /></svg>
              </ExtIcon>
              <ExtIcon><Avatar>t</Avatar></ExtIcon>
              <ExtIcon><EllipsisVertical size={34} strokeWidth={3} color="#fff" /></ExtIcon>
            </ExtIcons>
          </Toolbar>

          <Navbar>
            <Brand>Temuujin's eRegistrar : : : Student Management</Brand>
            <NavLink $w={408}>Browse Students</NavLink>
            <NavLink $w={300}>About Us</NavLink>
            <SearchForm>
              <SearchInput placeholder="Search" readOnly />
              <SubmitButton type="button">Submit</SubmitButton>
            </SearchForm>
          </Navbar>

          <Main>
            <Title>Student Update Form</Title>
            <Row $cols={1} $mb={42}>
              <Field>
                <Label>*Student Number:</Label>
                <TextInput defaultValue="000-61-0001" />
                <Help>Enter the Student ID Number, in the specified format</Help>
              </Field>
            </Row>
            <Row $cols={3} $mb={40}>
              <Field><Label>*First Name:</Label><TextInput defaultValue="Temka" /><Help>Enter the Student's First Name</Help></Field>
              <Field><Label>Middle Name:</Label><TextInput defaultValue="s" /></Field>
              <Field><Label>*Last Name:</Label><TextInput defaultValue="Smith" /><Help>Enter the Student's Last Name</Help></Field>
            </Row>
            <Row $cols={3} $mb={0}>
              <Field><Label>*Date of Enrollment:</Label><DateInput type="date" defaultValue="2022-07-02" /><Help>Enter the Patient's Date of birth</Help></Field>
              <Field><Label>CGPA:</Label><TextInput defaultValue="23.0" /><Help>Enter the Student's cgpa</Help></Field>
              <Field>
                <Label>*Is International Student?</Label>
                <Radios>
                  <RadioLabel><Radio type="radio" name="intl" $on defaultChecked />Yes</RadioLabel>
                  <RadioLabel><Radio type="radio" name="intl2" />No</RadioLabel>
                </Radios>
              </Field>
            </Row>
            <Actions>
              <CancelLink>Cancel</CancelLink>
              <ResetButton type="button">Reset</ResetButton>
              <UpdateButton type="button">Update Student</UpdateButton>
            </Actions>
          </Main>

          <Footer>
            <span>Temuujin Tsogt ::: CS425-SWE Spring MVC</span>
            <span>eRegistrar © Lab11 July 2022</span>
          </Footer>
        </Window>
      </WindowShadow>

      <Desktop>
        <BehindOutline />
        <BehindThumbs>
          <BehindThumb $c="#3a7cc4" /><BehindThumb $c="#d8d8d8" /><BehindThumb $c="#3a7cc4" /><BehindThumb $c="#e0b030" /><BehindThumb $c="#5ab04a" />
        </BehindThumbs>
        <Behind $x={918} $y={-9} $c="#6e6e6e">Screen Shot 2022-06-26 at 10:06:06 AM</Behind>
        <Behind $x={1508} $y={-9} $c="#6e6e6e">Jun 26, 2022 at 10:06 AM</Behind>
        <Behind $x={1983} $y={-9} $c="#6e6e6e">1 MB  PNG image</Behind>
        <BehindWindow />
        <BehindDoc />
        <Behind $x={918} $y={108} $c="#b0b0b0">description.md.docx</Behind>
        <Behind $x={1506} $y={108} $c="#b0b0b0">Jun 27, 2022 at 10:38 PM</Behind>
        <Behind $x={1965} $y={108} $c="#b0b0b0">17 KB</Behind>
        <Behind $x={2063} $y={108} $c="#b0b0b0">Micros...(.docx)</Behind>
        <BehindWedge />
        <Dock>
          <DockRun items={dockA} />
          <DockDivider />
          <DockRun items={dockB} />
          <DockDivider />
          <DockRun items={dockC} />
        </Dock>
      </Desktop>
    </Screen>
  );
}
